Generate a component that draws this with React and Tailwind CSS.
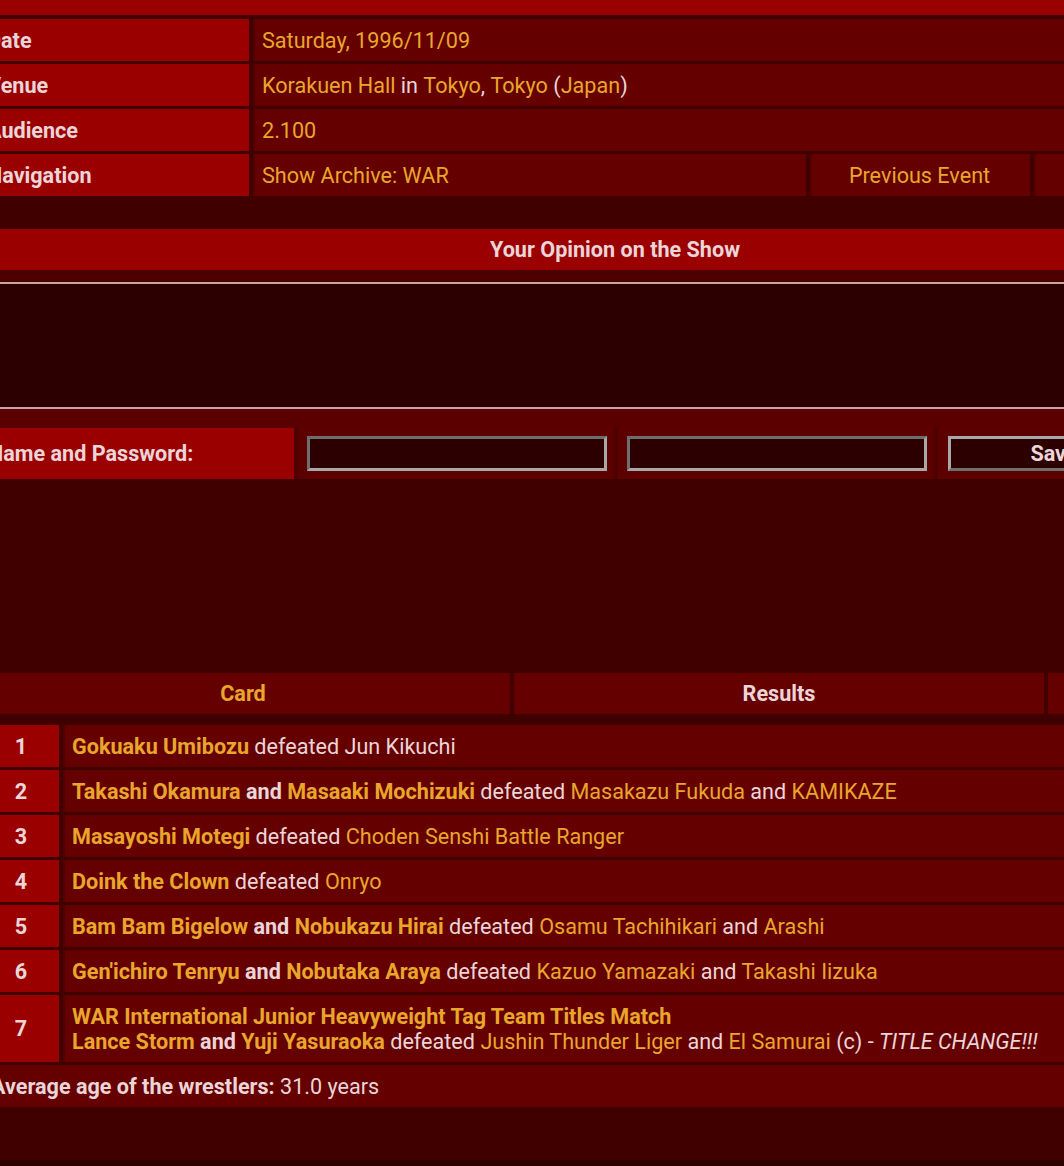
import React from 'react';

const G = 'text-[#e9a62c]';
const P = 'text-[#ecd5d8]';

const seg = (t, c = 'p', b = false, i = false) => ({ t, c, b, i });

const matches = [
  [[seg('Gokuaku Umibozu', 'g', true), seg(' defeated '), seg('Jun Kikuchi')]],
  [[
    seg('Takashi Okamura', 'g', true), seg(' and ', 'p', true), seg('Masaaki Mochizuki', 'g', true),
    seg(' defeated '), seg('Masakazu Fukuda', 'g'), seg(' and '), seg('KAMIKAZE', 'g'),
  ]],
  [[seg('Masayoshi Motegi', 'g', true), seg(' defeated '), seg('Choden Senshi Battle Ranger', 'g')]],
  [[seg('Doink the Clown', 'g', true), seg(' defeated '), seg('Onryo', 'g')]],
  [[
    seg('Bam Bam Bigelow', 'g', true), seg(' and ', 'p', true), seg('Nobukazu Hirai', 'g', true),
    seg(' defeated '), seg('Osamu Tachihikari', 'g'), seg(' and '), seg('Arashi', 'g'),
  ]],
  [[
    seg("Gen'ichiro Tenryu", 'g', true), seg(' and ', 'p', true), seg('Nobutaka Araya', 'g', true),
    seg(' defeated '), seg('Kazuo Yamazaki', 'g'), seg(' and '), seg('Takashi Iizuka', 'g'),
  ]],
  [
    [seg('WAR International Junior Heavyweight Tag Team Titles Match', 'g', true)],
    [
      seg('Lance Storm', 'g', true), seg(' and ', 'p', true), seg('Yuji Yasuraoka', 'g', true),
      seg(' defeated '), seg('Jushin Thunder Liger', 'g'), seg(' and '), seg('El Samurai', 'g'),
      seg(' (c) - '), seg('TITLE CHANGE!!!', 'p', false, true),
    ],
  ],
];

const Segs = ({ items }) => (
  <>
    {items.map((s, k) => (
      <span
        key={k}
        className={`${s.c === 'g' ? G : P} ${s.b ? 'font-bold' : ''} ${s.i ? 'italic' : ''} whitespace-pre`}
      >
        {s.t}
      </span>
    ))}
  </>
);

const InfoRow = ({ label, children }) => (
  <div className="flex gap-[4px] h-[42px]">
    <div className={`w-[273px] shrink-0 bg-[#9a0000] flex items-center pl-[11px] font-bold ${P}`}>{label}</div>
    {children}
  </div>
);

const Value = ({ children, className = '' }) => (
  <div className={`bg-[#650000] border-l-2 border-[#520000] flex items-center pl-[7px] ${className}`}>{children}</div>
);

export default function App() {
  return (
    <div className="w-[1064px] h-[1166px] overflow-hidden bg-[#410000] text-[21.6px] leading-[25px]" style={{ fontFamily: 'Roboto, "Liberation Sans", sans-serif' }}>
      <div className="-ml-[24px] w-[1278px] h-[1160px] flex flex-col">
        <div className="h-[15px] bg-[#990000]" />

        {/* event info */}
        <div className="mt-[4px] flex flex-col gap-[3px]">
          <InfoRow label="Date">
            <Value className="flex-1"><span className={G}>Saturday, 1996/11/09</span></Value>
          </InfoRow>
          <InfoRow label="Venue">
            <Value className="flex-1">
              <Segs items={[seg('Korakuen Hall', 'g'), seg(' in '), seg('Tokyo', 'g'), seg(', '), seg('Tokyo', 'g'), seg(' ('), seg('Japan', 'g'), seg(')')]} />
            </Value>
          </InfoRow>
          <InfoRow label="Audience">
            <Value className="flex-1"><span className={G}>2.100</span></Value>
          </InfoRow>
          <InfoRow label="Navigation">
            <Value className="w-[553px] shrink-0"><span className={G}>Show Archive: WAR</span></Value>
            <Value className="w-[220px] shrink-0 justify-center pl-0 pr-[10px] border-l-0"><span className={G}>Previous Event</span></Value>
            <Value className="flex-1 justify-center pl-0 border-l-0"><span className={G}>Next Event</span></Value>
          </InfoRow>
        </div>

        {/* opinion */}
        <div className={`mt-[33px] h-[41px] bg-[#9a0000] flex items-center justify-center font-bold ${P}`}>
          Your Opinion on the Show
        </div>
        <div className="bg-[#4c0000] pt-[12px]">
          <textarea className="block w-full h-[127px] bg-[#2d0000] border-y-2 border-x-0 border-[#c9a2a2] resize-none outline-none" />
          <div className="bg-[#5a0000] h-[19px]" />
          <div className="flex gap-[5px] h-[51px] bg-[#4f0000]">
            <div className={`w-[318px] shrink-0 bg-[#9a0000] flex items-center pl-[12px] font-bold ${P}`}>Name and Password:</div>
            <div className="w-[314px] bg-[#5c0000] pl-[8px] pt-[8px]">
              <input className="w-[300px] h-[35px] bg-[#2d0000] border-[3px] border-t-[#6e6e6e] border-l-[#6e6e6e] border-b-[#a8a8a8] border-r-[#a8a8a8] outline-none" />
            </div>
            <div className="w-[315px] bg-[#5c0000] pl-[9px] pt-[8px]">
              <input type="password" className="w-[300px] h-[35px] bg-[#2d0000] border-[3px] border-t-[#6e6e6e] border-l-[#6e6e6e] border-b-[#a8a8a8] border-r-[#a8a8a8] outline-none" />
            </div>
            <div className="flex-1 bg-[#5c0000] pl-[10px] pt-[8px]">
              <button className={`w-[212px] h-[35px] bg-[#2d0000] border-[3px] border-t-[#a8a8a8] border-l-[#a8a8a8] border-b-[#6e6e6e] border-r-[#6e6e6e] font-bold ${P}`}>
                Save
              </button>
            </div>
          </div>
          <div className="h-[3px] bg-[#3f0000]" />
        </div>

        {/* card tabs */}
        <div className="mt-[191px] flex gap-[4px] h-[41px]">
          <div className={`w-[534px] bg-[#650000] flex items-center justify-center font-bold ${G}`}>Card</div>
          <div className={`w-[530px] bg-[#650000] flex items-center justify-center font-bold ${P}`}>Results</div>
          <div className="flex-1 bg-[#650000]" />
        </div>

        {/* matches */}
        <div className="mt-[11px] flex flex-col gap-[3px]">
          {matches.map((lines, n) => (
            <div key={n} className={`flex gap-[4px] ${lines.length > 1 ? 'h-[67px]' : 'h-[42px]'}`}>
              <div className={`w-[83px] shrink-0 bg-[#9a0000] flex items-center justify-center pl-[7px] font-bold ${P}`}>{n + 1}</div>
              <div className="flex-1 bg-[#650000] border-l-2 border-[#520000] flex flex-col justify-center pl-[7px]">
                {lines.map((l, k) => (
                  <div key={k}><Segs items={l} /></div>
                ))}
              </div>
            </div>
          ))}
          <div className={`h-[42px] bg-[#650000] flex items-center pl-[15px] ${P}`}>
            <span className="font-bold whitespace-pre">Average age of the wrestlers: </span>
            <span>31.0 years</span>
          </div>
        </div>
      </div>
      <div className="h-[6px] bg-[#2e0000]" />
    </div>
  );
}
